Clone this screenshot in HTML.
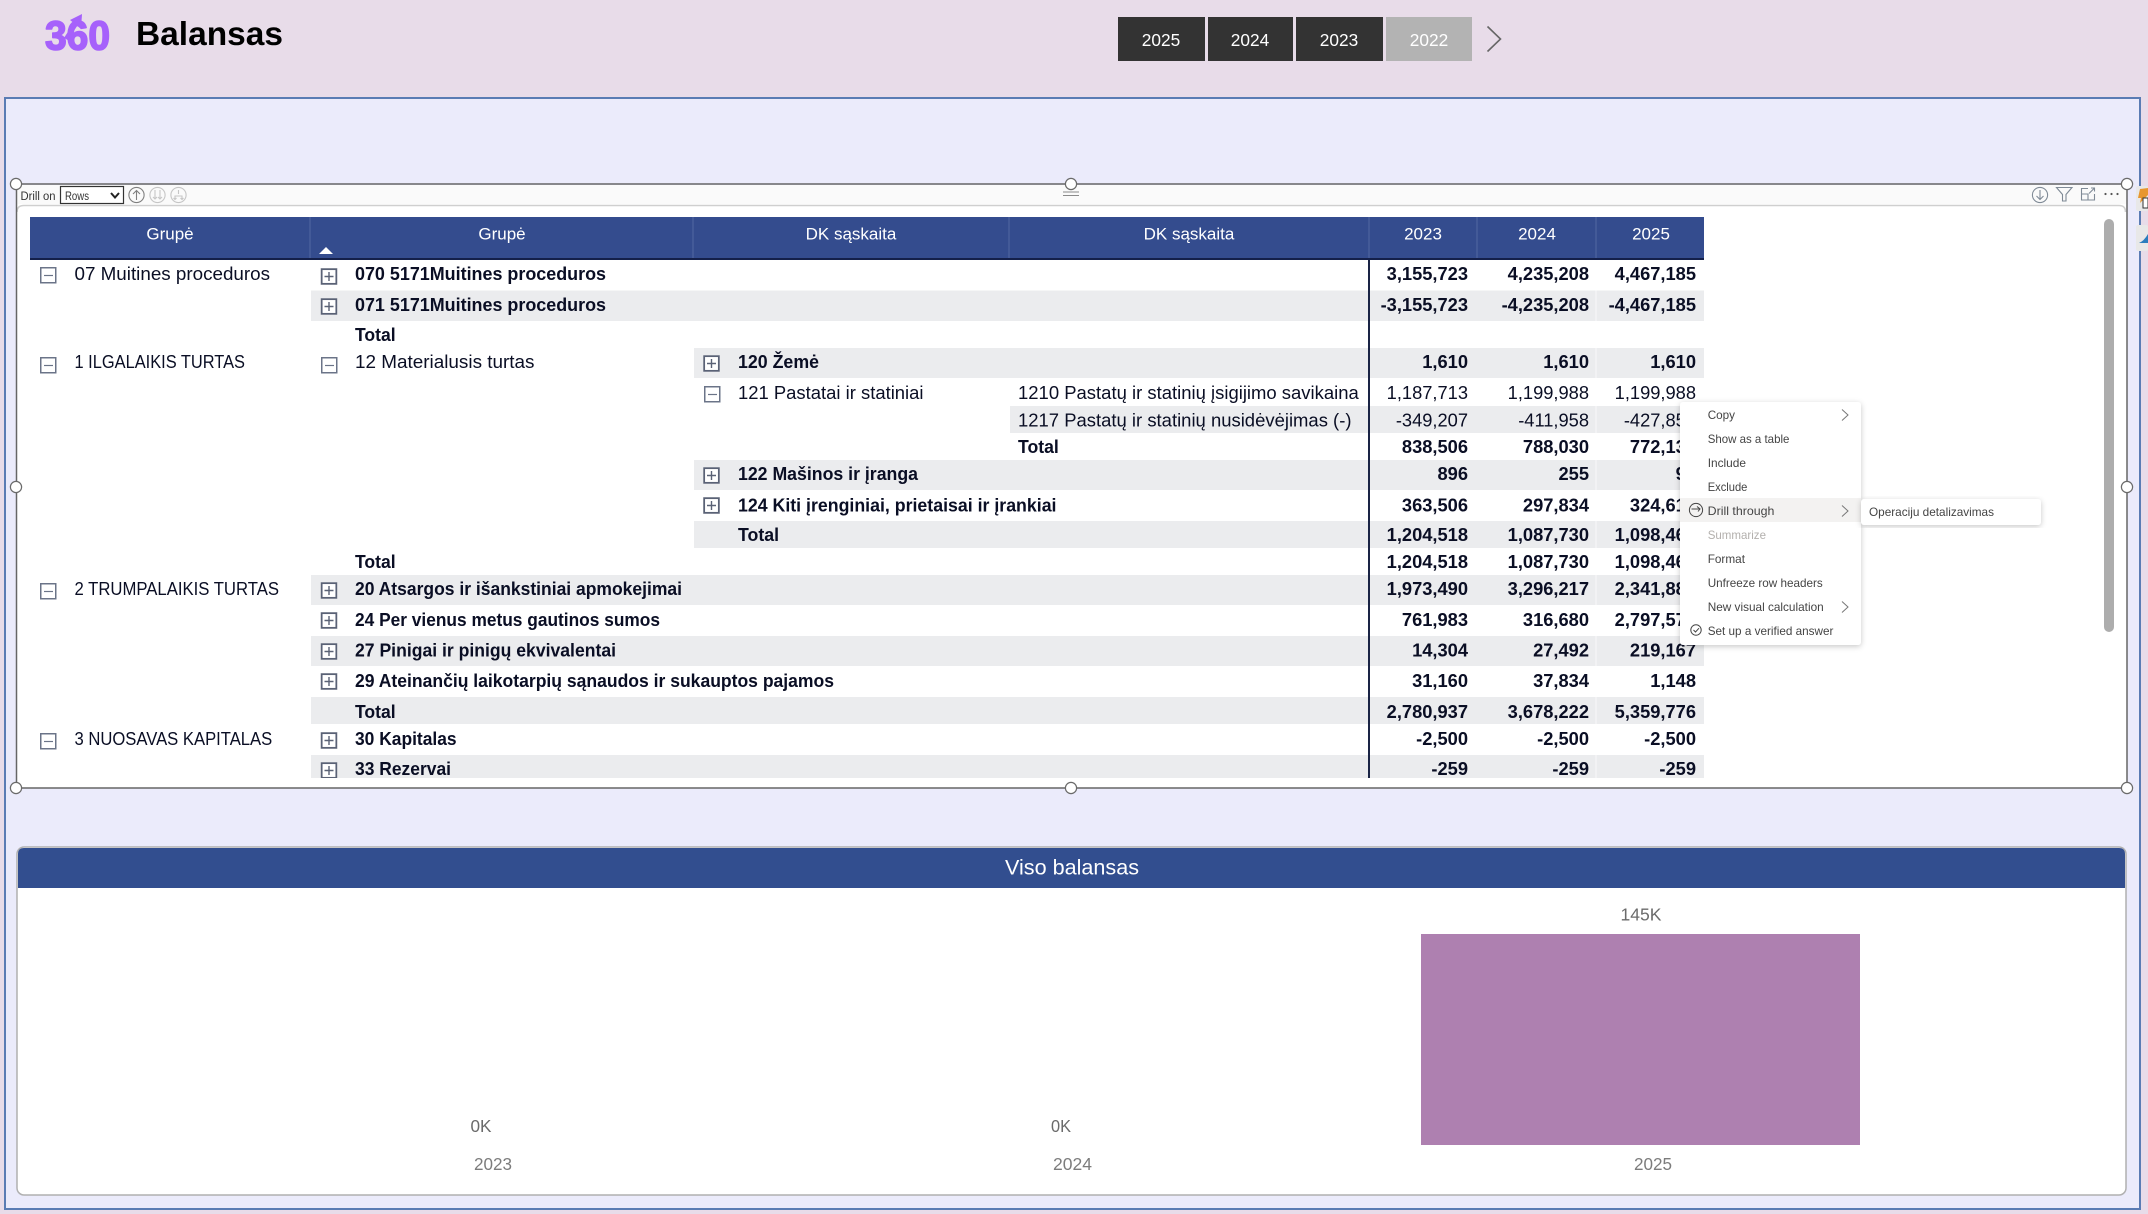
<!DOCTYPE html>
<html lang="lt">
<head>
<meta charset="utf-8">
<title>Balansas</title>
<style>
html,body{margin:0;padding:0;width:2148px;height:1214px;overflow:hidden;background:#e8dce9}
svg{display:block;position:absolute;left:0;top:0}
text{font-family:"Liberation Sans",Arial,sans-serif;white-space:pre}
.t{font-size:18.3px;fill:#0a0e24}
.b{font-size:18.3px;fill:#0a0e24;font-weight:700}
.n{font-size:18.3px;fill:#0a0e24;text-anchor:end}
.nb{font-size:18.3px;fill:#0a0e24;font-weight:700;text-anchor:end}
.h{font-size:17px;fill:#fff;text-anchor:middle}
.y{font-size:17.3px;fill:#fff;text-anchor:middle}
.m{font-size:12px;fill:#444}
.c{font-size:17.5px;fill:#6b6b6b}
</style>
</head>
<body>
<svg width="2148" height="1214" viewBox="0 0 2148 1214" xmlns="http://www.w3.org/2000/svg">
<defs>
<clipPath id="tc"><rect x="18" y="206" width="2100" height="572"/></clipPath>
<filter id="sh" x="-10%" y="-10%" width="120%" height="120%"><feDropShadow dx="0" dy="1.5" stdDeviation="3" flood-color="#000" flood-opacity=".22"/></filter>
<g id="mi"><rect x=".75" y=".75" width="15" height="15" fill="#fff" stroke="#6b7488" stroke-width="1.5"/><path d="M4 8.5h9" stroke="#6b7488" stroke-width="1.2"/></g>
<g id="pl"><rect x=".5" y=".5" width="16" height="16" fill="#fff" stroke="#d4d6da" stroke-width="1"/><rect x="1.2" y="1.2" width="14.6" height="14.6" fill="none" stroke="#5a6276" stroke-width="1.7"/><path d="M4 8.5h9M8.5 4v9" stroke="#5a6276" stroke-width="1.4" fill="none"/></g>
<circle id="hd" r="5.6" fill="#fff" stroke="#6a6a6a" stroke-width="1.2"/>
</defs>

<!-- top bar -->
<rect width="2148" height="1214" fill="#e8dce9"/>
<text x="45" y="49.5" font-size="41" font-weight="700" fill="#a661fb" stroke="#a661fb" stroke-width="1.6" stroke-linejoin="round" textLength="65" lengthAdjust="spacingAndGlyphs">360</text>
<path d="M66 39 L77 22" stroke="#a661fb" stroke-width="4.5" fill="none"/>
<path d="M82 14 L81 29 L70 20 Z" fill="#a661fb"/>
<text x="136" y="45" font-size="33" font-weight="700" fill="#000" textLength="147" lengthAdjust="spacingAndGlyphs">Balansas</text>

<rect x="1118" y="17" width="87" height="44" fill="#333"/>
<rect x="1208" y="17" width="85" height="44" fill="#333"/>
<rect x="1296" y="17" width="87" height="44" fill="#333"/>
<rect x="1386" y="17" width="86" height="44" fill="#b3b3b3"/>
<text class="y" x="1161" y="46">2025</text>
<text class="y" x="1250" y="46">2024</text>
<text class="y" x="1339" y="46">2023</text>
<text class="y" x="1429" y="46">2022</text>
<path d="M1487.5 26.5 L1500.5 39 L1487.5 51.5" fill="none" stroke="#666" stroke-width="1.6"/>

<!-- outer panel -->
<rect x="5" y="98" width="2135" height="1111" fill="#ebebfb" stroke="#5a7cb4" stroke-width="2"/>

<!-- matrix visual -->
<rect x="17" y="185" width="2110" height="603" fill="#fff"/>
<rect x="17" y="185" width="2110" height="19" fill="#fafafa"/>
<path d="M17 212 Q17 205.5 24 205.5 H2119 Q2125.5 205.5 2125.5 212" fill="none" stroke="#cfcfcf" stroke-width="1.6"/>
<rect x="16.5" y="184" width="2110.5" height="604" fill="none" stroke="#666" stroke-width="1.5"/>

<text x="20.5" y="200" font-size="11.5" fill="#333" textLength="35" lengthAdjust="spacingAndGlyphs">Drill on</text>
<rect x="60.5" y="186.5" width="63" height="17" fill="#fff" stroke="#333" stroke-width="1.2"/>
<text x="65" y="200" font-size="11.5" fill="#333" textLength="24" lengthAdjust="spacingAndGlyphs">Rows</text>
<path d="M111 193 L115 197.5 L119 193" fill="none" stroke="#222" stroke-width="2"/>
<g fill="none" stroke="#7f7f7f" stroke-width="1.1"><circle cx="136.5" cy="195" r="7.6"/><path d="M136.5 200V190.5M133 194l3.5-3.5 3.5 3.5"/></g>
<g fill="none" stroke="#c6c6c6" stroke-width="1.1"><circle cx="157.5" cy="195" r="7.6"/><path d="M155 190v9M153 197l2 2 2-2M160 190v9M158 197l2 2 2-2"/><circle cx="178.5" cy="195" r="7.6"/><path d="M178.5 190v4M175 199v-3h7v3M173.5 198l1.5 1.5 1.5-1.5M180.5 198l1.5 1.5 1.5-1.5"/></g>

<g fill="none" stroke="#7f8a96" stroke-width="1.1">
<circle cx="2040" cy="195" r="7.6"/><path d="M2040 190v9.5M2036.5 196l3.5 3.5 3.5-3.5"/>
<path d="M2056.5 187.5h15.5l-6 7v6.5h-3.5v-6.5z"/>
<path d="M2088 188.5h-6.5v11.5h13v-6M2081.5 194h6.5v6M2089 193.5l5.5-5.5M2091 188h3.5v3.5"/>
</g>
<g fill="#555"><circle cx="2105.5" cy="194" r="1.1"/><circle cx="2111.5" cy="194" r="1.1"/><circle cx="2117.5" cy="194" r="1.1"/></g>

<use href="#hd" x="16" y="184"/><use href="#hd" x="1071" y="184"/><use href="#hd" x="2127" y="184"/>
<use href="#hd" x="16" y="487"/><use href="#hd" x="2127" y="487"/>
<use href="#hd" x="16" y="788"/><use href="#hd" x="1071" y="788"/><use href="#hd" x="2127" y="788"/>
<path d="M1063 192h16M1063 195.5h16" stroke="#8a8a8a" stroke-width="1"/>

<!-- side tabs -->
<rect x="2136" y="186" width="12" height="25" rx="2" fill="#e8e8e8"/>
<rect x="2136" y="225" width="12" height="26" rx="2" fill="#e8e8e8"/>
<path d="M2148 188l-8 1-2 9 3 0-1 5 8-8z" fill="#e8962e"/>
<path d="M2143 198h5v10h-5z" fill="#fff" stroke="#333"/>
<path d="M2139 243 Q2144 241 2148 234 V243 Z" fill="#2a7dbe"/>

<!-- scrollbar -->
<rect x="2104" y="219" width="10" height="413" rx="5" fill="#adadad"/>

<!-- table header -->
<rect x="30" y="217" width="1674" height="41" fill="#344c8e"/>
<rect x="30" y="258" width="1674" height="2" fill="#14204a"/>
<g stroke="#5268a3" stroke-width="1"><path d="M310 217v41M693 217v41M1009 217v41M1369 217v41M1477 217v41M1596 217v41"/></g>
<text class="h" x="170" y="239.5">Grupė</text>
<text class="h" x="502" y="239.5">Grupė</text>
<text class="h" x="851" y="239.5">DK sąskaita</text>
<text class="h" x="1189" y="239.5">DK sąskaita</text>
<text class="h" x="1423" y="239.5" font-size="17.3">2023</text>
<text class="h" x="1537" y="239.5" font-size="17.3">2024</text>
<text class="h" x="1651" y="239.5" font-size="17.3">2025</text>
<path d="M319 254 L326 247 L333 254 Z" fill="#fff"/>

<g clip-path="url(#tc)">
<!-- bands -->
<g fill="#ebecee">
<rect x="311" y="290.5" width="1393" height="30.5"/>
<rect x="694" y="348" width="1010" height="30"/>
<rect x="1010" y="406" width="694" height="27"/>
<rect x="694" y="460" width="1010" height="30"/>
<rect x="694" y="521" width="1010" height="27"/>
<rect x="311" y="575" width="1393" height="30"/>
<rect x="311" y="636" width="1393" height="30"/>
<rect x="311" y="697" width="1393" height="27"/>
<rect x="311" y="755" width="1393" height="23"/>
</g>
<path d="M1596 260V778" stroke="#fff" stroke-width="1" opacity=".7"/>
<path d="M1369 260V778" stroke="#1a2445" stroke-width="2"/>

<!-- expanders -->
<use href="#mi" x="40" y="267"/><use href="#mi" x="40" y="357"/><use href="#mi" x="40" y="583"/><use href="#mi" x="40" y="733"/>
<use href="#pl" x="320.5" y="268"/><use href="#pl" x="320.5" y="298"/>
<use href="#mi" x="321" y="357"/>
<use href="#pl" x="320.5" y="582"/><use href="#pl" x="320.5" y="612"/><use href="#pl" x="320.5" y="643"/><use href="#pl" x="320.5" y="673"/><use href="#pl" x="320.5" y="732"/><use href="#pl" x="320.5" y="762"/>
<use href="#pl" x="703" y="355"/><use href="#mi" x="704" y="386"/><use href="#pl" x="703" y="467"/><use href="#pl" x="703" y="497"/>

<!-- col 1 -->
<text class="t" x="74.5" y="280" textLength="195.5" lengthAdjust="spacingAndGlyphs">07 Muitines proceduros</text>
<text class="t" x="74.5" y="368" textLength="170.5" lengthAdjust="spacingAndGlyphs">1 ILGALAIKIS TURTAS</text>
<text class="t" x="74.5" y="595" textLength="204.5" lengthAdjust="spacingAndGlyphs">2 TRUMPALAIKIS TURTAS</text>
<text class="t" x="74.5" y="745" textLength="197.7" lengthAdjust="spacingAndGlyphs">3 NUOSAVAS KAPITALAS</text>

<!-- col 2 -->
<text class="b" x="355" y="280" textLength="251" lengthAdjust="spacingAndGlyphs">070 5171Muitines proceduros</text>
<text class="b" x="355" y="311" textLength="251" lengthAdjust="spacingAndGlyphs">071 5171Muitines proceduros</text>
<text class="b" x="355" y="341" textLength="40.6" lengthAdjust="spacingAndGlyphs">Total</text>
<text class="t" x="355" y="368" textLength="179.5" lengthAdjust="spacingAndGlyphs">12 Materialusis turtas</text>
<text class="b" x="355" y="568" textLength="40.6" lengthAdjust="spacingAndGlyphs">Total</text>
<text class="b" x="355" y="595" textLength="327" lengthAdjust="spacingAndGlyphs">20 Atsargos ir išankstiniai apmokejimai</text>
<text class="b" x="355" y="626" textLength="305" lengthAdjust="spacingAndGlyphs">24 Per vienus metus gautinos sumos</text>
<text class="b" x="355" y="656.5" textLength="261" lengthAdjust="spacingAndGlyphs">27 Pinigai ir pinigų ekvivalentai</text>
<text class="b" x="355" y="687" textLength="479" lengthAdjust="spacingAndGlyphs">29 Ateinančių laikotarpių sąnaudos ir sukauptos pajamos</text>
<text class="b" x="355" y="718" textLength="40.6" lengthAdjust="spacingAndGlyphs">Total</text>
<text class="b" x="355" y="745" textLength="101.6" lengthAdjust="spacingAndGlyphs">30 Kapitalas</text>
<text class="b" x="355" y="775" textLength="96" lengthAdjust="spacingAndGlyphs">33 Rezervai</text>

<!-- col 3 -->
<text class="b" x="738" y="368" textLength="81" lengthAdjust="spacingAndGlyphs">120 Žemė</text>
<text class="t" x="738" y="399" textLength="185.5" lengthAdjust="spacingAndGlyphs">121 Pastatai ir statiniai</text>
<text class="b" x="738" y="480" textLength="180" lengthAdjust="spacingAndGlyphs">122 Mašinos ir įranga</text>
<text class="b" x="738" y="511.5" textLength="318.5" lengthAdjust="spacingAndGlyphs">124 Kiti įrenginiai, prietaisai ir įrankiai</text>
<text class="b" x="738" y="541" textLength="41" lengthAdjust="spacingAndGlyphs">Total</text>

<!-- col 4 -->
<text class="t" x="1018" y="399" textLength="340.8" lengthAdjust="spacingAndGlyphs">1210 Pastatų ir statinių įsigijimo savikaina</text>
<text class="t" x="1018" y="426.5" textLength="333.5" lengthAdjust="spacingAndGlyphs">1217 Pastatų ir statinių nusidėvėjimas (-)</text>
<text class="b" x="1018" y="453" textLength="40.8" lengthAdjust="spacingAndGlyphs">Total</text>

<!-- numbers -->
<text class="nb" x="1468" y="280">3,155,723</text><text class="nb" x="1589" y="280">4,235,208</text><text class="nb" x="1696" y="280">4,467,185</text>
<text class="nb" x="1468" y="311">-3,155,723</text><text class="nb" x="1589" y="311">-4,235,208</text><text class="nb" x="1696" y="311">-4,467,185</text>
<text class="nb" x="1468" y="368">1,610</text><text class="nb" x="1589" y="368">1,610</text><text class="nb" x="1696" y="368">1,610</text>
<text class="n" x="1468" y="399">1,187,713</text><text class="n" x="1589" y="399">1,199,988</text><text class="n" x="1696" y="399">1,199,988</text>
<text class="n" x="1468" y="426.5">-349,207</text><text class="n" x="1589" y="426.5">-411,958</text><text class="n" x="1696" y="426.5">-427,851</text>
<text class="nb" x="1468" y="453">838,506</text><text class="nb" x="1589" y="453">788,030</text><text class="nb" x="1696" y="453">772,137</text>
<text class="nb" x="1468" y="480">896</text><text class="nb" x="1589" y="480">255</text><text class="nb" x="1696" y="480">93</text>
<text class="nb" x="1468" y="511.5">363,506</text><text class="nb" x="1589" y="511.5">297,834</text><text class="nb" x="1696" y="511.5">324,613</text>
<text class="nb" x="1468" y="541">1,204,518</text><text class="nb" x="1589" y="541">1,087,730</text><text class="nb" x="1696" y="541">1,098,469</text>
<text class="nb" x="1468" y="568">1,204,518</text><text class="nb" x="1589" y="568">1,087,730</text><text class="nb" x="1696" y="568">1,098,469</text>
<text class="nb" x="1468" y="595">1,973,490</text><text class="nb" x="1589" y="595">3,296,217</text><text class="nb" x="1696" y="595">2,341,881</text>
<text class="nb" x="1468" y="626">761,983</text><text class="nb" x="1589" y="626">316,680</text><text class="nb" x="1696" y="626">2,797,571</text>
<text class="nb" x="1468" y="656.5">14,304</text><text class="nb" x="1589" y="656.5">27,492</text><text class="nb" x="1696" y="656.5">219,167</text>
<text class="nb" x="1468" y="687">31,160</text><text class="nb" x="1589" y="687">37,834</text><text class="nb" x="1696" y="687">1,148</text>
<text class="nb" x="1468" y="718">2,780,937</text><text class="nb" x="1589" y="718">3,678,222</text><text class="nb" x="1696" y="718">5,359,776</text>
<text class="nb" x="1468" y="745">-2,500</text><text class="nb" x="1589" y="745">-2,500</text><text class="nb" x="1696" y="745">-2,500</text>
<text class="nb" x="1468" y="775">-259</text><text class="nb" x="1589" y="775">-259</text><text class="nb" x="1696" y="775">-259</text>
</g>

<!-- context menu -->
<rect x="1680" y="402" width="181" height="243" rx="3" fill="#fff" filter="url(#sh)"/>
<rect x="1680" y="498" width="181" height="24" fill="#f3f2f1"/>
<text class="m" x="1707.7" y="419" textLength="27.3" lengthAdjust="spacingAndGlyphs">Copy</text>
<text class="m" x="1707.7" y="443" textLength="81.7" lengthAdjust="spacingAndGlyphs">Show as a table</text>
<text class="m" x="1707.7" y="467" textLength="38.3" lengthAdjust="spacingAndGlyphs">Include</text>
<text class="m" x="1707.7" y="491" textLength="39.7" lengthAdjust="spacingAndGlyphs">Exclude</text>
<text class="m" x="1707.7" y="515" textLength="66.7" lengthAdjust="spacingAndGlyphs">Drill through</text>
<text class="m" x="1707.7" y="539" textLength="58.3" lengthAdjust="spacingAndGlyphs" style="fill:#b3b0ad">Summarize</text>
<text class="m" x="1707.7" y="563" textLength="37.3" lengthAdjust="spacingAndGlyphs">Format</text>
<text class="m" x="1707.7" y="587" textLength="115" lengthAdjust="spacingAndGlyphs">Unfreeze row headers</text>
<text class="m" x="1707.7" y="611" textLength="116" lengthAdjust="spacingAndGlyphs">New visual calculation</text>
<text class="m" x="1707.7" y="635" textLength="125.7" lengthAdjust="spacingAndGlyphs">Set up a verified answer</text>
<g fill="none" stroke="#777" stroke-width="1"><path d="M1842 409.5l6 5.5-6 5.5M1842 505.5l6 5.5-6 5.5M1842 601.5l6 5.5-6 5.5"/></g>
<g fill="none" stroke="#444" stroke-width="1"><circle cx="1696" cy="510" r="6.6"/><path d="M1691.5 509h8M1697 506.5l3 2.5-2 2.5"/><circle cx="1696" cy="630" r="5.2"/><path d="M1693.5 630l2 2 3.5-3.8"/></g>

<rect x="1861" y="499" width="180" height="26" rx="3" fill="#fff" filter="url(#sh)"/>
<text class="m" x="1869" y="516" textLength="125" lengthAdjust="spacingAndGlyphs">Operaciju detalizavimas</text>

<!-- bottom visual -->
<rect x="17" y="847" width="2109" height="348" rx="7" fill="#fff" stroke="#b0b0b0" stroke-width="1.5"/>
<path d="M18 888 V854 Q18 848 24 848 H2119 Q2125 848 2125 854 V888 Z" fill="#324e8f"/>
<text x="1072" y="874.5" font-size="21.5" fill="#fff" text-anchor="middle" textLength="134" lengthAdjust="spacingAndGlyphs">Viso balansas</text>

<rect x="1421" y="934" width="439" height="211" fill="#ae80b0"/>
<text class="c" x="1620.5" y="920.5" textLength="41" lengthAdjust="spacingAndGlyphs">145K</text>
<text class="c" x="470.5" y="1132" textLength="21" lengthAdjust="spacingAndGlyphs">0K</text>
<text class="c" x="1051" y="1132" textLength="20" lengthAdjust="spacingAndGlyphs">0K</text>
<text class="c" x="474" y="1170" textLength="38" lengthAdjust="spacingAndGlyphs" style="fill:#7c7c7c">2023</text>
<text class="c" x="1053" y="1170" textLength="39" lengthAdjust="spacingAndGlyphs" style="fill:#7c7c7c">2024</text>
<text class="c" x="1634" y="1170" textLength="38" lengthAdjust="spacingAndGlyphs" style="fill:#7c7c7c">2025</text>
</svg>
</body>
</html>
